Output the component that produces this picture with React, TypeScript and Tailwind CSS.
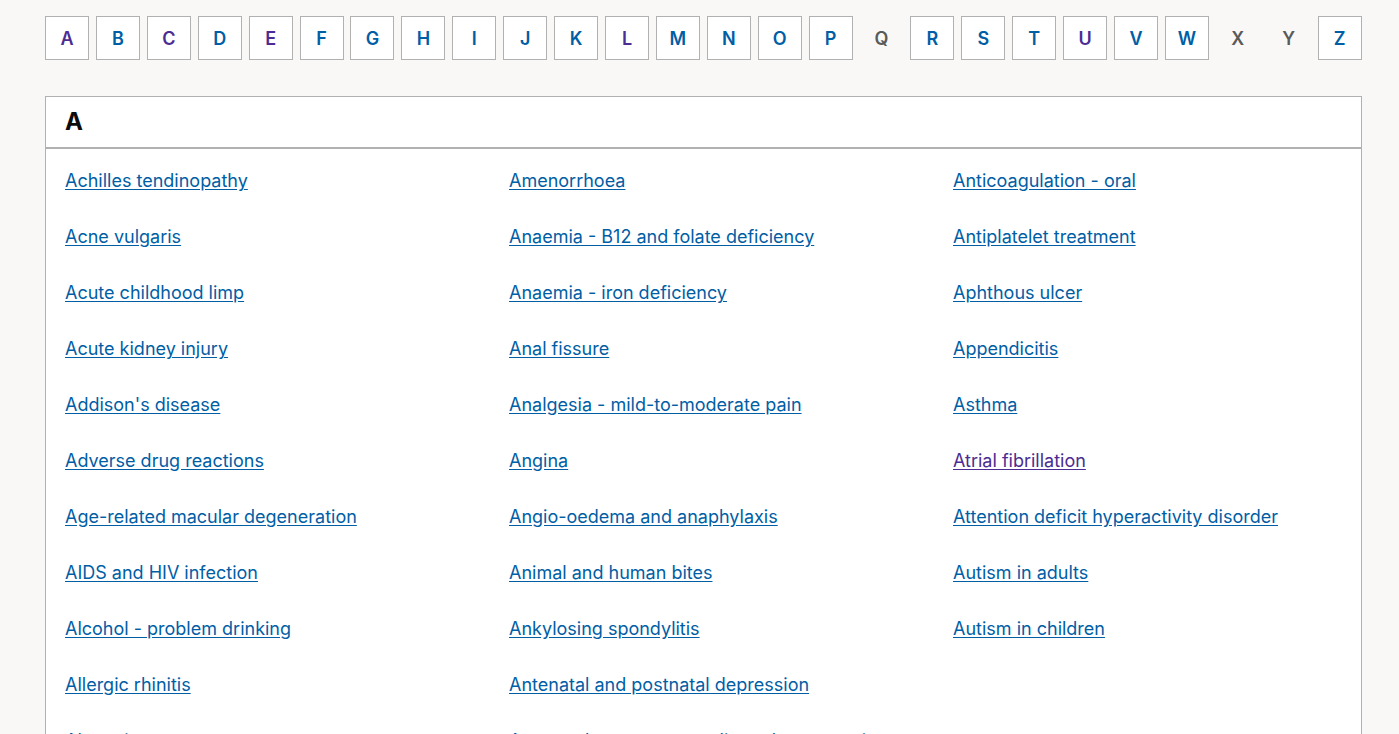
import React from 'react';

const letters: { l: string; state: 'link' | 'visited' | 'none' }[] = [
  { l: 'A', state: 'visited' },
  { l: 'B', state: 'link' },
  { l: 'C', state: 'visited' },
  { l: 'D', state: 'link' },
  { l: 'E', state: 'visited' },
  { l: 'F', state: 'link' },
  { l: 'G', state: 'link' },
  { l: 'H', state: 'link' },
  { l: 'I', state: 'link' },
  { l: 'J', state: 'link' },
  { l: 'K', state: 'link' },
  { l: 'L', state: 'visited' },
  { l: 'M', state: 'link' },
  { l: 'N', state: 'link' },
  { l: 'O', state: 'link' },
  { l: 'P', state: 'link' },
  { l: 'Q', state: 'none' },
  { l: 'R', state: 'link' },
  { l: 'S', state: 'link' },
  { l: 'T', state: 'link' },
  { l: 'U', state: 'visited' },
  { l: 'V', state: 'link' },
  { l: 'W', state: 'link' },
  { l: 'X', state: 'none' },
  { l: 'Y', state: 'none' },
  { l: 'Z', state: 'link' },
];

// column by column, as in the reference
const columns: string[][] = [
  [
    'Achilles tendinopathy',
    'Acne vulgaris',
    'Acute childhood limp',
    'Acute kidney injury',
    "Addison's disease",
    'Adverse drug reactions',
    'Age-related macular degeneration',
    'AIDS and HIV infection',
    'Alcohol - problem drinking',
    'Allergic rhinitis',
    'Alopecia areata',
  ],
  [
    'Amenorrhoea',
    'Anaemia - B12 and folate deficiency',
    'Anaemia - iron deficiency',
    'Anal fissure',
    'Analgesia - mild-to-moderate pain',
    'Angina',
    'Angio-oedema and anaphylaxis',
    'Animal and human bites',
    'Ankylosing spondylitis',
    'Antenatal and postnatal depression',
    'Antenatal care - uncomplicated pregnancies',
  ],
  [
    'Anticoagulation - oral',
    'Antiplatelet treatment',
    'Aphthous ulcer',
    'Appendicitis',
    'Asthma',
    'Atrial fibrillation',
    'Attention deficit hyperactivity disorder',
    'Autism in adults',
    'Autism in children',
  ],
];

const visitedTopics = ['Atrial fibrillation'];

export default function App() {
  return (
    <div className="min-h-screen bg-[#f9f8f6] pl-[45px] pr-[37px] pt-4 font-['Inter',_'Liberation_Sans',_sans-serif]">
      {/* A-Z nav */}
      <nav className="flex justify-between">
        {letters.map(({ l, state }) =>
          state === 'none' ? (
            <span
              key={l}
              className="flex h-[44px] w-[44px] items-center justify-center text-[18px] font-semibold text-[#5a5a5a]"
            >
              {l}
            </span>
          ) : (
            <a
              key={l}
              href="#"
              className={
                'flex h-[44px] w-[44px] items-center justify-center border border-[#b1b1b1] bg-white text-[18px] font-semibold ' +
                (state === 'visited' ? 'text-[#4c2c92]' : 'text-[#005ea5]')
              }
            >
              {l}
            </a>
          )
        )}
      </nav>

      {/* Letter panel */}
      <section className="mt-9 border border-[#b1b1b1] bg-white">
        <h2 className="flex h-[52px] items-center border-b-2 border-[#b1b1b1] px-[19px] text-[24px] font-bold text-[#0b0c0c]">
          A
        </h2>
        <div className="grid grid-cols-3 gap-x-[55px] px-[19px] pt-[20px]">
          {columns.map((col, i) => (
            <ul key={i} className="flex flex-col">
              {col.map((t) => (
                <li key={t} className="mb-[32px] text-[18px] leading-[24px]">
                  <a
                    href="#"
                    className={
                      'underline underline-offset-[2px] ' +
                      (visitedTopics.includes(t) ? 'text-[#4c2c92]' : 'text-[#005ea5]')
                    }
                  >
                    {t}
                  </a>
                </li>
              ))}
            </ul>
          ))}
        </div>
      </section>
    </div>
  );
}
